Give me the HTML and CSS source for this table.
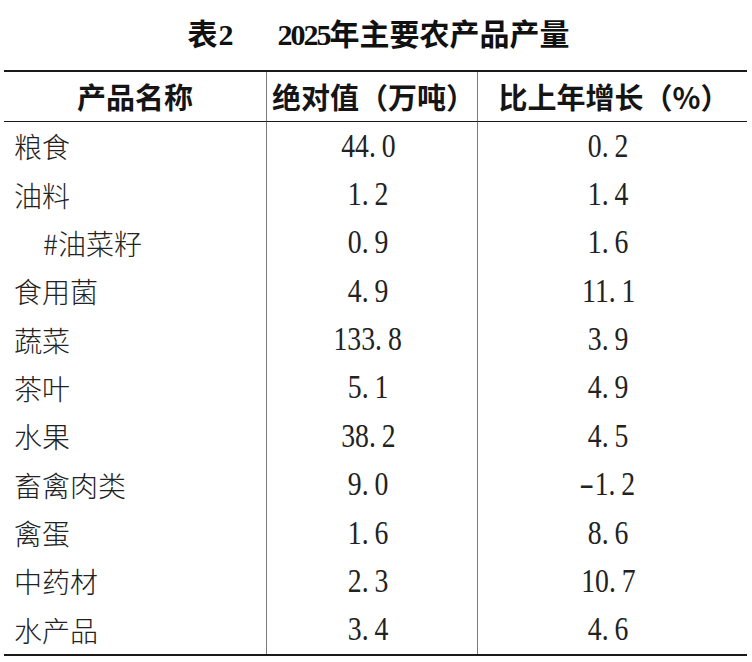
FILE: index.html
```html
<!DOCTYPE html>
<html lang="zh-CN">
<head>
<meta charset="utf-8">
<title>表2 2025年主要农产品产量</title>
<link rel="stylesheet" href="styles.css">
</head>
<body>
<h1 class="title"><span class="t-no">表<span class="d">2</span></span><span class="t-name"><span class="d">2025</span>年主要农产品产量</span></h1>
<table class="data">
  <colgroup>
    <col class="c1"><col class="c2"><col class="c3">
  </colgroup>
  <thead>
    <tr><th>产品名称</th><th class="sep">绝对值（万吨）</th><th class="sep">比上年增长（%）</th></tr>
  </thead>
  <tbody>
    <tr><td class="name">粮食</td><td class="num sep"><span class="n">44<span class="dot">.</span>0</span></td><td class="num sep"><span class="n">0<span class="dot">.</span>2</span></td></tr>
    <tr><td class="name">油料</td><td class="num sep"><span class="n">1<span class="dot">.</span>2</span></td><td class="num sep"><span class="n">1<span class="dot">.</span>4</span></td></tr>
    <tr><td class="name sub">#油菜籽</td><td class="num sep"><span class="n">0<span class="dot">.</span>9</span></td><td class="num sep"><span class="n">1<span class="dot">.</span>6</span></td></tr>
    <tr><td class="name">食用菌</td><td class="num sep"><span class="n">4<span class="dot">.</span>9</span></td><td class="num sep"><span class="n">11<span class="dot">.</span>1</span></td></tr>
    <tr><td class="name">蔬菜</td><td class="num sep"><span class="n">133<span class="dot">.</span>8</span></td><td class="num sep"><span class="n">3<span class="dot">.</span>9</span></td></tr>
    <tr><td class="name">茶叶</td><td class="num sep"><span class="n">5<span class="dot">.</span>1</span></td><td class="num sep"><span class="n">4<span class="dot">.</span>9</span></td></tr>
    <tr><td class="name">水果</td><td class="num sep"><span class="n">38<span class="dot">.</span>2</span></td><td class="num sep"><span class="n">4<span class="dot">.</span>5</span></td></tr>
    <tr><td class="name">畜禽肉类</td><td class="num sep"><span class="n">9<span class="dot">.</span>0</span></td><td class="num sep"><span class="n"><span class="minus">-</span>1<span class="dot">.</span>2</span></td></tr>
    <tr><td class="name">禽蛋</td><td class="num sep"><span class="n">1<span class="dot">.</span>6</span></td><td class="num sep"><span class="n">8<span class="dot">.</span>6</span></td></tr>
    <tr><td class="name">中药材</td><td class="num sep"><span class="n">2<span class="dot">.</span>3</span></td><td class="num sep"><span class="n">10<span class="dot">.</span>7</span></td></tr>
    <tr><td class="name">水产品</td><td class="num sep"><span class="n">3<span class="dot">.</span>4</span></td><td class="num sep"><span class="n">4<span class="dot">.</span>6</span></td></tr>
  </tbody>
</table>
</body>
</html>
```
FILE: styles.css
```css
html, body {
  margin: 0;
  padding: 0;
  background: #ffffff;
}
body {
  width: 752px;
  color: #1c1c1c;
  font-family: "Noto Sans CJK SC", "Noto Sans", sans-serif;
}
.title {
  margin: 0;
  height: 70px;
  display: flex;
  align-items: center;
  justify-content: center;
  gap: 46px;
  padding-left: 5px;
  box-sizing: border-box;
  font-family: "Liberation Serif", "Noto Sans CJK SC", serif;
  font-size: 30px;
  font-weight: 700;
  line-height: 1;
  color: #111111;
}
.title .d {
  letter-spacing: -2px;
}
.title .t-no .d {
  margin-left: 1px;
}
.data {
  margin-left: 4px;
  width: 743px;
  table-layout: fixed;
  border-collapse: separate;
  border-spacing: 0;
  border-top: 2px solid #1a1a1a;
  border-bottom: 2px solid #1a1a1a;
}
.c1 { width: 262px; }
.c2 { width: 211px; }
.c3 { width: 270px; }
.data th {
  height: 49px;
  padding: 0;
  border-bottom: 1px solid #1a1a1a;
  font-size: 29px;
  font-weight: 700;
  line-height: 1;
  text-align: center;
  vertical-align: middle;
  white-space: nowrap;
  color: #151515;
}
.data th.sep {
  padding-left: 3px;
}
.data td {
  height: 48.36px;
  padding: 0;
  font-size: 28px;
  font-weight: 300;
  line-height: 1;
  vertical-align: middle;
  white-space: nowrap;
}
.data .sep {
  border-left: 1px solid #7a7a7a;
}
.data td.name {
  padding-left: 10px;
  text-align: left;
  color: #222222;
}
.data td.sub {
  padding-left: 39px;
}
.data td.num {
  text-align: center;
  padding-right: 8px;
}
.n {
  display: inline-block;
  font-family: "Liberation Serif", serif;
  font-size: 33px;
  font-weight: 400;
  line-height: 1;
  color: #222222;
  transform: scaleX(0.84);
}
.dot {
  margin-right: 7px;
}
.minus {
  display: inline-block;
  transform: scaleX(1.6);
  margin-right: 4px;
}
```
